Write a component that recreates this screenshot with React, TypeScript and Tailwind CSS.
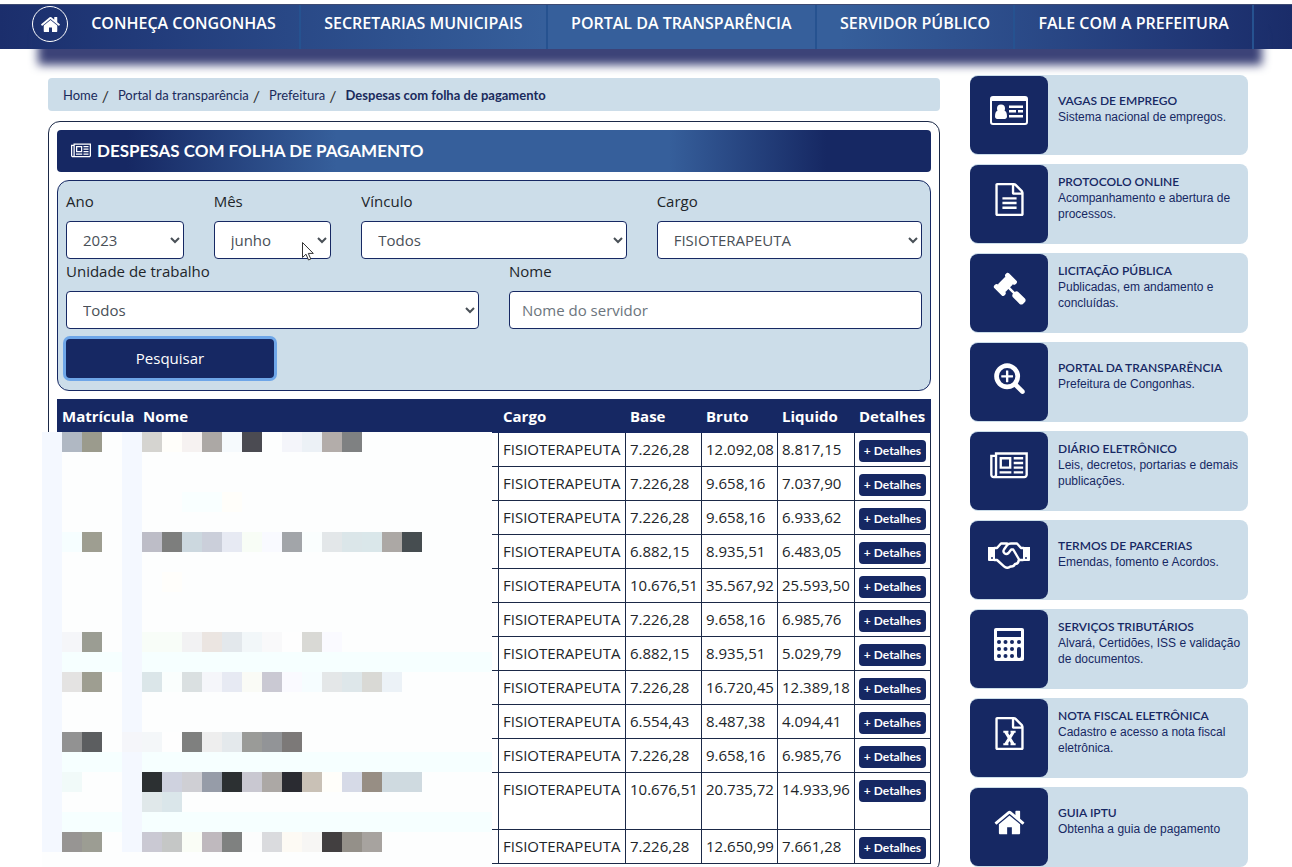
import type { ReactNode } from "react";

const menuItems = [
  "CONHEÇA CONGONHAS",
  "SECRETARIAS MUNICIPAIS",
  "PORTAL DA TRANSPARÊNCIA",
  "SERVIDOR PÚBLICO",
  "FALE COM A PREFEITURA",
];

const breadcrumbItems = ["Home", "Portal da transparência", "Prefeitura"];

const payroll = [
  { base: "7.226,28", bruto: "12.092,08", liquido: "8.817,15" },
  { base: "7.226,28", bruto: "9.658,16", liquido: "7.037,90" },
  { base: "7.226,28", bruto: "9.658,16", liquido: "6.933,62" },
  { base: "6.882,15", bruto: "8.935,51", liquido: "6.483,05" },
  { base: "10.676,51", bruto: "35.567,92", liquido: "25.593,50" },
  { base: "7.226,28", bruto: "9.658,16", liquido: "6.985,76" },
  { base: "6.882,15", bruto: "8.935,51", liquido: "5.029,79" },
  { base: "7.226,28", bruto: "16.720,45", liquido: "12.389,18" },
  { base: "6.554,43", bruto: "8.487,38", liquido: "4.094,41" },
  { base: "7.226,28", bruto: "9.658,16", liquido: "6.985,76" },
  { base: "10.676,51", bruto: "20.735,72", liquido: "14.933,96", tall: true },
  { base: "7.226,28", bruto: "12.650,99", liquido: "7.661,28" },
];

// Mosaic over the private columns: row -> [first column, colours...]
const mosaic: { row: number; col: number; colors: string[] }[] = [
  { row: 0, col: 1, colors: ["#b0b8c3", "#9b9b8d"] },
  { row: 0, col: 5, colors: ["#d5d4d0", "#fffefa", "#f6f2f1", "#aca8a5", "#f6fafd", "#4b4b52", "#fdfefe", "#f4f5fa", "#ecf1f6", "#b3adaa", "#7f8182"] },
  { row: 3, col: 7, colors: ["#f9ffff", "#f9ffff", "#fffefa"] },
  { row: 5, col: 1, colors: ["#f6feff", "#9e9e91"] },
  { row: 5, col: 5, colors: ["#bdbdc7", "#7d7e7d", "#ccd8df", "#cbcfda", "#e7eaf3", "#f8fdf6", "#f9faff", "#a2a5a9", "#fafefe", "#e3e7e9", "#dbe6e9", "#dae7ea", "#aca8a5", "#464d50"] },
  { row: 7, col: 6, colors: ["#fffefb"] },
  { row: 10, col: 1, colors: ["#f5f6f9", "#9b9d93"] },
  { row: 10, col: 5, colors: ["#f8fdf8", "#f8fdf8", "#f2f2f3", "#ebe5e1", "#e3e8ec", "#f2f7f9", "#f9f9fa", "#fefefe", "#d9d9d5", "#fafaff"] },
  { row: 12, col: 1, colors: ["#e4e3e2", "#9e9e91"] },
  { row: 12, col: 5, colors: ["#dbe6e9", "#fafefd", "#dae0e1", "#f5f6fa", "#e7eaf3", "#fafbf6", "#cac9d3", "#fafaff", "#f6fdff", "#e4e7e8", "#dee7ea", "#d9d9d5", "#ecf2f7"] },
  { row: 15, col: 1, colors: ["#929292", "#5c5e60"] },
  { row: 15, col: 4, colors: ["#f5f6fa", "#f4f7f9", "#fefefe", "#7f807f", "#eeeeee", "#e4e9ec", "#9a9b98", "#929497", "#7c7978"] },
  { row: 17, col: 1, colors: ["#f1faf9"] },
  { row: 17, col: 5, colors: ["#2c3032", "#cfd2df", "#cfcfd4", "#969ca8", "#2c3032", "#c9c8d1", "#aca8a5", "#2a2b31", "#c9c1b6", "#fffefa", "#d6dae7", "#978e84", "#cfdae0", "#cfdae0"] },
  { row: 18, col: 5, colors: ["#e0e8ea", "#dae6ea"] },
  { row: 20, col: 1, colors: ["#979593", "#9c9d93"] },
  { row: 20, col: 5, colors: ["#cac9d3", "#c5c7c6", "#fafdf6", "#bfb9be", "#7f8180", "#fcfdfd", "#dadbde", "#fdfaf4", "#f7f6f4", "#423f40", "#949089", "#a7a39f"] },
];

const faHome =
  "M1472 992v480q0 26-19 45t-45 19h-384v-384h-256v384h-384q-26 0-45-19t-19-45v-480q0-1 .5-3t.5-3l575-474 575 474q1 2 1 6zm223-69l-62 74q-8 9-21 11h-3q-13 0-21-7l-692-577-692 577q-12 8-24 7-13-2-21-11l-62-74q-8-10-7-23.5t11-21.5l719-599q32-26 76-26t76 26l244 204v-195q0-14 9-23t23-9h192q14 0 23 9t9 23v408l219 182q10 8 11 21.5t-7 23.5z";
const faNewspaper =
  "M1024 512h-384v384h384v-384zm128 640v128h-640v-128h640zm0-768v640h-640v-640h640zm640 768v128h-512v-128h512zm0-256v128h-512v-128h512zm0-256v128h-512v-128h512zm0-256v128h-512v-128h512zm-1536 960v-960h-128v960q0 26 19 45t45 19 45-19 19-45zm1664 0v-1088h-1536v1088q0 33-11 64h1483q26 0 45-19t19-45zm128-1216v1216q0 80-56 136t-136 56h-1664q-80 0-136-56t-56-136v-1088h256v-128h1792z";
const faFile =
  "M1596 380q28 28 48 76t20 88v1152q0 40-28 68t-68 28h-1344q-40 0-68-28t-28-68v-1600q0-40 28-68t68-28h896q40 0 88 20t76 48zm-444-244v376h376q-10-29-22-41l-313-313q-12-12-41-22zm384 1528v-1024h-416q-40 0-68-28t-28-68v-416h-768v1536h1280z";
const faSearchPlus =
  "M1088 800v64q0 13-9.5 22.5t-22.5 9.5h-224v224q0 13-9.5 22.5t-22.5 9.5h-64q-13 0-22.5-9.5t-9.5-22.5v-224h-224q-13 0-22.5-9.5t-9.5-22.5v-64q0-13 9.5-22.5t22.5-9.5h224v-224q0-13 9.5-22.5t22.5-9.5h64q13 0 22.5 9.5t9.5 22.5v224h224q13 0 22.5 9.5t9.5 22.5zm128 32q0-185-131.5-316.5t-316.5-131.5-316.5 131.5-131.5 316.5 131.5 316.5 316.5 131.5 316.5-131.5 131.5-316.5zm512 832q0 53-37.5 90.5t-90.5 37.5q-54 0-90-38l-343-342q-179 124-399 124-143 0-273.5-55.5t-225-150-150-225-55.5-273.5 55.5-273.5 150-225 225-150 273.5-55.5 273.5 55.5 225 150 150 225 55.5 273.5q0 220-124 399l343 343q37 37 37 90z";
const faGavel =
  "M1771 1536q0 53-37 90l-107 108q-39 37-91 37-53 0-90-37l-363-364q-38-36-38-90 0-53 43-96l-256-256-126 126q-14 14-34 14t-34-14q2 2 12.5 12t12.5 13 10 11.5 10 13.5 6 13.5 5.5 16.5 1.5 18q0 38-28 68-3 3-16.5 18t-19 20.5-18.5 16.5-22 15.5-22 9-26 4.5q-40 0-68-28l-408-408q-28-28-28-68 0-13 4.5-26t9-22 15.5-22 16.5-18.5 20.5-19 18-16.5q30-28 68-28 10 0 18 1.5t16.5 5.5 13.5 6 13.5 10 11.5 10 13 12.5 12 12.5q-14-14-14-34t14-34l348-348q14-14 34-14t34 14q-2-2-12.5-12t-12.5-13-10-11.5-10-13.5-6-13.5-5.5-16.5-1.5-18q0-38 28-68 3-3 16.5-18t19-20.5 18.5-16.5 22-15.5 22-9 26-4.5q40 0 68 28l408 408q28 28 28 68 0 13-4.5 26t-9 22-15.5 22-16.5 18.5-20.5 19-18 16.5q-30 28-68 28-10 0-18-1.5t-16.5-5.5-13.5-6-13.5-10-11.5-10-13-12.5-12-12.5q14 14 14 34t-14 34l-126 126 256 256q43-43 96-43 52 0 91 37l363 363q37 39 37 91z";

const iconCard = (
  <svg width="38" height="29" viewBox="0 0 38 29" fill="currentColor" aria-hidden="true">
    <path
      fillRule="evenodd"
      d="M3 0h32a3 3 0 0 1 3 3v23a3 3 0 0 1-3 3H3a3 3 0 0 1-3-3V3a3 3 0 0 1 3-3zM2 5v21a1 1 0 0 0 1 1h32a1 1 0 0 0 1-1V5z"
    />
    <circle cx="11" cy="12.500" r="4" />
    <path d="M5 20.500c0-4 1.200-6 3.200-6 1.800 1.600 3.800 1.600 5.600 0 2 0 3.200 2 3.200 6 0 1.500-1 2.500-2.200 2.500H7.200C6 23 5 22 5 20.500z" />
    <path d="M19 9.500h14V12H19zM19 14h7v2.500h-7zM28 14h5v2.500h-5zM19 19h14v2.500H19z" />
  </svg>
);

const iconFileText = (
  <svg width="33" height="33" viewBox="0 0 1792 1792" fill="currentColor" aria-hidden="true">
    <path d={faFile} />
    <path d="M512 768h768v128H512zM512 1024h768v128H512zM512 1280h768v128H512z" />
  </svg>
);

const iconFileExcel = (
  <svg width="33" height="33" viewBox="0 0 1792 1792" fill="currentColor" aria-hidden="true">
    <path d={faFile} />
    <g fill="none" stroke="currentColor">
      <path strokeWidth="170" d="M680 800l420 680M1110 800l-420 680" />
      <path strokeWidth="110" d="M560 800h280M950 800h280M560 1480h280M950 1480h280" />
    </g>
  </svg>
);

const iconGavel = (
  <svg width="33" height="33" viewBox="0 0 1792 1792" fill="currentColor" aria-hidden="true">
    <path d={faGavel} />
  </svg>
);

const iconSearchPlus = (
  <svg width="33" height="33" viewBox="0 0 1792 1792" fill="currentColor" aria-hidden="true">
    <path d={faSearchPlus} />
  </svg>
);

const iconNewspaper = (
  <svg width="38" height="33" viewBox="0 0 2048 1792" fill="currentColor" aria-hidden="true">
    <path d={faNewspaper} />
  </svg>
);

const iconHandshake = (
  <svg width="42" height="27" viewBox="0 0 42 27" fill="none" stroke="currentColor" strokeWidth="2.400" strokeLinejoin="round" strokeLinecap="round" aria-hidden="true">
    <path fill="currentColor" stroke="none" fillRule="evenodd" d="M0 5h7v14H1a1 1 0 0 1-1-1zM5 16a1 1 0 1 0-2 0 1 1 0 0 0 2 0zM42 5h-7v14h6a1 1 0 0 0 1-1zM39 16a1 1 0 1 0-2 0 1 1 0 0 0 2 0z" />
    <path d="M6.500 6H9l4-4.500h6M6.500 18H9l7 6.300c2 1.800 4.500 1.800 6.500.2 2 .3 3.800-.8 4.500-2.500 2 0 3.500-1.500 3.800-4H35M35.500 6H33l-4-4.500h-6c-2 0-3 .5-4 1.800l-3 4.200c-1.800 3 1.800 6 4.500 3.500l2.700-3.500h2l5.600 9.500" />
  </svg>
);

const iconCalculator = (
  <svg width="30" height="33" viewBox="0 0 30 33" aria-hidden="true">
    <rect width="30" height="33" rx="2" fill="currentColor" />
    <g fill="#162863">
      <rect x="3" y="3" width="24" height="6" />
      {[14, 21, 28].map((cy) =>
        [5, 11.5, 18].map((cx) => <circle key={`${cx}-${cy}`} cx={cx} cy={cy} r="2" />)
      )}
      <circle cx="25" cy="14" r="2" />
      <rect x="23" y="19" width="4" height="11" rx="2" />
    </g>
  </svg>
);

const iconHome = (
  <svg width="33" height="33" viewBox="0 0 1792 1792" fill="currentColor" aria-hidden="true">
    <path d={faHome} />
  </svg>
);

const services: { title: string; text: string; icon: ReactNode }[] = [
  { title: "VAGAS DE EMPREGO", text: "Sistema nacional de empregos.", icon: iconCard },
  { title: "PROTOCOLO ONLINE", text: "Acompanhamento e abertura de processos.", icon: iconFileText },
  { title: "LICITAÇÃO PÚBLICA", text: "Publicadas, em andamento e concluídas.", icon: iconGavel },
  { title: "PORTAL DA TRANSPARÊNCIA", text: "Prefeitura de Congonhas.", icon: iconSearchPlus },
  { title: "DIÁRIO ELETRÔNICO", text: "Leis, decretos, portarias e demais publicações.", icon: iconNewspaper },
  { title: "TERMOS DE PARCERIAS", text: "Emendas, fomento e Acordos.", icon: iconHandshake },
  { title: "SERVIÇOS TRIBUTÁRIOS", text: "Alvará, Certidões, ISS e validação de documentos.", icon: iconCalculator },
  { title: "NOTA FISCAL ELETRÔNICA", text: "Cadastro e acesso a nota fiscal eletrônica.", icon: iconFileExcel },
  { title: "GUIA IPTU", text: "Obtenha a guia de pagamento", icon: iconHome },
];

function Navbar() {
  return (
    <nav className="mt-1 border-t border-[#3d4a72] bg-[linear-gradient(90deg,#1b2e6c_0%,#223c7b_12%,#365f9b_42%,#365f9b_65%,#223a79_90%,#1a2c69_100%)]">
      <div className="mr-6 ml-8 flex h-[44px] items-stretch pr-[14px] shadow-[0_22px_10px_-6px_#3c4378]">
        <a
          href="#home"
          aria-label="Página inicial"
          className="mt-px flex size-9 shrink-0 items-center justify-center rounded-full border border-white text-white"
        >
          <svg width="21" height="21" viewBox="0 0 1792 1792" fill="currentColor" aria-hidden="true">
            <path d={faHome} />
          </svg>
        </a>
        {menuItems.map((item) => (
          <a
            key={item}
            href="#menu"
            className="flex flex-auto items-center justify-center border-r-2 border-[#265290] pb-2 font-['Open_Sans',sans-serif] text-base font-semibold whitespace-nowrap text-white"
          >
            {item}
          </a>
        ))}
      </div>
    </nav>
  );
}

function Breadcrumb() {
  return (
    <ol className="flex h-[33px] items-center rounded bg-[#ccdde9] px-[15px] pt-[2px] font-[Lato,sans-serif] text-[13px] text-[#1a2a5c]">
      {breadcrumbItems.map((item) => (
        <li key={item} className="flex">
          <a href="#nivel">{item}</a>
          <span className="pr-[9px] pl-1 text-base leading-5 text-[#333]">/</span>
        </li>
      ))}
      <li className="font-bold">Despesas com folha de pagamento</li>
    </ol>
  );
}

function SelectField({
  id,
  label,
  value,
  className,
  children,
}: {
  id: string;
  label: string;
  value: string;
  className: string;
  children?: ReactNode;
}) {
  return (
    <div className={className}>
      <label htmlFor={id} className="mb-2 block leading-6 text-[#212529]">
        {label}
      </label>
      <select
        id={id}
        defaultValue={value}
        className="block h-[38px] w-full rounded border border-[#162863] bg-white px-3 text-[#495057]"
      >
        <option>{value}</option>
      </select>
      {children}
    </div>
  );
}

function Filters() {
  return (
    <form className="mt-2 grid grid-cols-6 gap-x-[30px] rounded-xl border border-[#162863] bg-[#ccdde9] px-2 pt-2 pb-3 font-['Open_Sans',sans-serif] text-[15px]">
      <SelectField id="ano" label="Ano" value="2023" className="col-span-1" />
      <SelectField id="mes" label="Mês" value="junho" className="relative col-span-1">
        <svg
          className="pointer-events-none absolute right-4 bottom-[-3px]"
          width="14"
          height="21"
          viewBox="0 0 14 21"
          fill="#fff"
          stroke="#333"
          aria-hidden="true"
        >
          <path d="M1.500 1.500v15l3.500-3.300 2.500 5.800 2.300-1-2.500-5.600h5z" />
        </svg>
      </SelectField>
      <SelectField id="vinculo" label="Vínculo" value="Todos" className="col-span-2" />
      <SelectField id="cargo" label="Cargo" value="FISIOTERAPEUTA" className="col-span-2" />
      <SelectField id="unidade" label="Unidade de trabalho" value="Todos" className="col-span-3" />
      <div className="col-span-3">
        <label htmlFor="nome" className="mb-2 block leading-6 text-[#212529]">
          Nome
        </label>
        <input
          id="nome"
          type="text"
          placeholder="Nome do servidor"
          className="block h-[38px] w-full rounded border border-[#162863] bg-white px-3 placeholder:text-[#6c757d]"
        />
      </div>
      <div className="col-span-6 pt-[10px]">
        <button
          type="button"
          className="h-[39px] w-52 rounded bg-[#162863] text-[15px] text-white ring-3 ring-[#6ea6e8]"
        >
          Pesquisar
        </button>
      </div>
    </form>
  );
}

function Mosaic() {
  return (
    <svg
      className="absolute top-[33px] -left-[15px]"
      width="450"
      height="440"
      viewBox="0 0 450 440"
      shapeRendering="crispEdges"
      aria-hidden="true"
    >
      <rect width="450" height="440" fill="#fdfefe" />
      {[11, 16, 19].map((row) => (
        <rect key={row} y={row * 20} width="450" height="20" fill="#f6ffff" />
      ))}
      <rect width="20" height="420" fill="#f4f8ff" />
      <rect x="80" width="20" height="420" fill="#f4f8ff" />
      {mosaic.map(({ row, col, colors }) =>
        colors.map((color, i) => (
          <rect
            key={`${row}-${col + i}`}
            x={(col + i) * 20}
            y={row * 20}
            width="20"
            height="20"
            fill={color}
          />
        ))
      )}
    </svg>
  );
}

function PayrollTable() {
  return (
    <div className="relative mt-2">
      <table className="w-full table-fixed border-collapse font-['Open_Sans',sans-serif] text-[15px] leading-6 text-[#212529]">
        <colgroup>
          <col className="w-[81px]" />
          <col />
          <col className="w-[127px]" />
          <col className="w-[76px]" />
          <col className="w-[76px]" />
          <col className="w-[77px]" />
          <col className="w-[76px]" />
        </colgroup>
        <thead>
          <tr className="h-[33px] bg-[#162863] text-left text-white">
            {["Matrícula", "Nome", "Cargo", "Base", "Bruto", "Liquido", "Detalhes"].map((head) => (
              <th key={head} className="border border-[#162863] px-1 font-bold">
                {head}
              </th>
            ))}
          </tr>
        </thead>
        <tbody>
          {payroll.map((row, index) => (
            <tr
              key={index}
              className={
                row.tall
                  ? "h-[57px] align-top *:border *:border-[#1b2947] *:px-1 *:pt-1"
                  : "h-[34px] align-top *:border *:border-[#1b2947] *:px-1 *:pt-1"
              }
            >
              <td></td>
              <td></td>
              <td>FISIOTERAPEUTA</td>
              <td>{row.base}</td>
              <td>{row.bruto}</td>
              <td>{row.liquido}</td>
              <td>
                <button
                  type="button"
                  className="mt-[3px] block h-[22px] w-[67px] rounded bg-[#162863] font-[Lato,'Open_Sans',sans-serif] text-xs leading-5 font-bold whitespace-nowrap text-white"
                >
                  + Detalhes
                </button>
              </td>
            </tr>
          ))}
        </tbody>
      </table>
      <Mosaic />
    </div>
  );
}

function Sidebar() {
  return (
    <aside className="flex w-[278px] shrink-0 flex-col gap-[9px]">
      {services.map((service) => (
        <a
          key={service.title}
          href="#servico"
          className="flex h-20 shrink-0 items-center rounded-lg bg-[#ccdde9] text-[#162863]"
        >
          <span className="flex size-[78px] shrink-0 items-center justify-center rounded-lg bg-[#162863] pb-[10px] text-white">
            {service.icon}
          </span>
          <span className="block pb-3 pl-[10px] text-xs leading-4">
            <span className="block font-[Lato,sans-serif] font-semibold">
              {service.title}
            </span>
            <span className="block font-['Liberation_Sans',Arial,sans-serif]">
              {service.text}
            </span>
          </span>
        </a>
      ))}
    </aside>
  );
}

export default function App() {
  return (
    <div className="flex h-screen flex-col overflow-hidden bg-white">
      <Navbar />
      <div className="flex items-start gap-[30px] pt-[26px] pr-11 pl-12">
        <main className="min-w-0 flex-1 pt-[3px]">
          <Breadcrumb />
          <section className="mt-[10px] rounded-xl border border-[#1b2947] p-2">
            <h1 className="flex h-[42px] items-center gap-[6px] rounded bg-[linear-gradient(90deg,#162863_8%,#365f9b_32%,#365f9b_70%,#162863_88%)] px-[14px] font-[Lato,sans-serif] text-[17px] font-bold text-white">
              <svg width="20" height="18" viewBox="0 0 2048 1792" fill="currentColor" aria-hidden="true">
                <path d={faNewspaper} />
              </svg>
              DESPESAS COM FOLHA DE PAGAMENTO
            </h1>
            <Filters />
            <PayrollTable />
          </section>
        </main>
        <Sidebar />
      </div>
    </div>
  );
}
